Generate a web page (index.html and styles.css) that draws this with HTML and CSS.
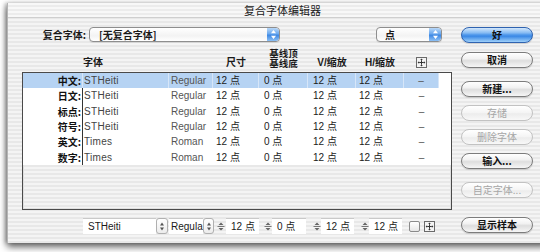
FILE: index.html
```html
<!DOCTYPE html>
<html lang="zh">
<head>
<meta charset="utf-8">
<title>复合字体编辑器</title>
<link rel="stylesheet" href="styles.css">
</head>
<body>
<div class="window">
  <div class="titlebar">复合字体编辑器</div>
  <div class="content">
    <div class="main">
      <div class="toprow">
        <span class="lbl">复合字体:</span>
        <div class="popup popup-wide">
          <span class="popup-text">[无复合字体]</span>
          <span class="popup-arrows"><svg width="7" height="11" viewBox="0 0 7 11"><path d="M3.5 1L6 4.2H1z M3.5 10L6 6.8H1z" fill="#fff"/></svg></span>
        </div>
        <div class="popup popup-unit">
          <span class="popup-text">点</span>
          <span class="popup-arrows"><svg width="7" height="11" viewBox="0 0 7 11"><path d="M3.5 1L6 4.2H1z M3.5 10L6 6.8H1z" fill="#fff"/></svg></span>
        </div>
      </div>

      <div class="grid head">
        <div></div>
        <div class="h-left">字体</div>
        <div></div>
        <div>尺寸</div>
        <div class="h-two">基线顶<br>基线底</div>
        <div>V/缩放</div>
        <div>H/缩放</div>
        <div class="h-icon"><svg class="movebox" width="11" height="11" viewBox="0 0 11 11"><rect x=".5" y=".5" width="10" height="10" fill="#f4f4f4" stroke="#6a6a6a"/><path d="M5.5 3.2v4.6M3.2 5.5h4.6" stroke="#333" stroke-width="1"/><path d="M5.5 1.6l-1.3 1.5h2.6z M5.5 9.4l-1.3-1.5h2.6z M1.6 5.5l1.5-1.3v2.6z M9.4 5.5l-1.5-1.3v2.6z" fill="#333"/></svg></div>
        <div></div>
      </div>

      <div class="table">
        <div class="grid row sel">
          <div class="c-lbl">中文:</div><div class="c-font">STHeiti</div><div class="c-style">Regular</div><div class="c-size">12 点</div><div class="c-base">0 点</div><div class="c-v">12 点</div><div class="c-h">12 点</div><div class="c-dash">–</div><div class="c-end"></div>
        </div>
        <div class="grid row">
          <div class="c-lbl">日文:</div><div class="c-font">STHeiti</div><div class="c-style">Regular</div><div class="c-size">12 点</div><div class="c-base">0 点</div><div class="c-v">12 点</div><div class="c-h">12 点</div><div class="c-dash">–</div><div class="c-end"></div>
        </div>
        <div class="grid row">
          <div class="c-lbl">标点:</div><div class="c-font">STHeiti</div><div class="c-style">Regular</div><div class="c-size">12 点</div><div class="c-base">0 点</div><div class="c-v">12 点</div><div class="c-h">12 点</div><div class="c-dash">–</div><div class="c-end"></div>
        </div>
        <div class="grid row">
          <div class="c-lbl">符号:</div><div class="c-font">STHeiti</div><div class="c-style">Regular</div><div class="c-size">12 点</div><div class="c-base">0 点</div><div class="c-v">12 点</div><div class="c-h">12 点</div><div class="c-dash">–</div><div class="c-end"></div>
        </div>
        <div class="grid row">
          <div class="c-lbl">英文:</div><div class="c-font">Times</div><div class="c-style">Roman</div><div class="c-size">12 点</div><div class="c-base">0 点</div><div class="c-v">12 点</div><div class="c-h">12 点</div><div class="c-dash">–</div><div class="c-end"></div>
        </div>
        <div class="grid row">
          <div class="c-lbl">数字:</div><div class="c-font">Times</div><div class="c-style">Roman</div><div class="c-size">12 点</div><div class="c-base">0 点</div><div class="c-v">12 点</div><div class="c-h">12 点</div><div class="c-dash">–</div><div class="c-end"></div>
        </div>
      </div>

      <div class="bottom">
        <div class="field f-font">STHeiti</div>
        <div class="stepper"><svg width="6" height="11" viewBox="0 0 6 11"><path d="M3 1.5L5 4.5H1z M3 9.5L5 6.5H1z" fill="#555"/></svg></div>
        <div class="field f-style">Regula</div>
        <div class="stepper s2"><svg width="6" height="11" viewBox="0 0 6 11"><path d="M3 1.5L5 4.5H1z M3 9.5L5 6.5H1z" fill="#555"/></svg></div>

        <div class="spin sp1"><svg width="8" height="11" viewBox="0 0 8 11"><path d="M4 1.5L6.5 4H1.5z M4 9.5L6.5 7H1.5z" fill="#666"/><path d="M0.5 5.5h7" stroke="#777"/></svg></div>
        <div class="field f-num">12 点</div>
        <div class="spin sp2"><svg width="8" height="11" viewBox="0 0 8 11"><path d="M4 1.5L6.5 4H1.5z M4 9.5L6.5 7H1.5z" fill="#666"/><path d="M0.5 5.5h7" stroke="#777"/></svg></div>
        <div class="field f-num f-base">0 点</div>
        <div class="spin sp3"><svg width="8" height="11" viewBox="0 0 8 11"><path d="M4 1.5L6.5 4H1.5z M4 9.5L6.5 7H1.5z" fill="#666"/><path d="M0.5 5.5h7" stroke="#777"/></svg></div>
        <div class="field f-num">12 点</div>
        <div class="spin sp3"><svg width="8" height="11" viewBox="0 0 8 11"><path d="M4 1.5L6.5 4H1.5z M4 9.5L6.5 7H1.5z" fill="#666"/><path d="M0.5 5.5h7" stroke="#777"/></svg></div>
        <div class="field f-num">12 点</div>

        <div class="checkbox"></div>
        <svg class="movebox mb2" width="11" height="11" viewBox="0 0 11 11"><rect x=".5" y=".5" width="10" height="10" fill="#f4f4f4" stroke="#6a6a6a"/><path d="M5.5 3.2v4.6M3.2 5.5h4.6" stroke="#333" stroke-width="1"/><path d="M5.5 1.6l-1.3 1.5h2.6z M5.5 9.4l-1.3-1.5h2.6z M1.6 5.5l1.5-1.3v2.6z M9.4 5.5l-1.5-1.3v2.6z" fill="#333"/></svg>
      </div>
    </div>

    <div class="buttons">
      <div class="btn default b-ok">好</div>
      <div class="btn b-cancel">取消</div>
      <div class="btn b-new">新建...</div>
      <div class="btn disabled b-gap8">存储</div>
      <div class="btn disabled b-gap8">删除字体</div>
      <div class="btn b-gap8">输入...</div>
      <div class="btn disabled b-custom">自定字体...</div>
      <div class="btn b-sample">显示样本</div>
    </div>
  </div>
</div>
</body>
</html>
```

FILE: styles.css
```css
* { box-sizing: border-box; }

html, body {
  margin: 0;
  padding: 0;
  width: 540px;
  height: 252px;
  overflow: hidden;
  background: #ffffff;
}

body {
  font-family: "Liberation Sans", "Noto Sans CJK SC", sans-serif;
  font-size: 10px;
  color: #1a1a1a;
}

.window {
  margin: 3px 0 0 7px;
  width: 540px;
  height: 240px;
  background: repeating-linear-gradient(to bottom, #f4f4f4 0, #f4f4f4 2px, #e8e8e8 2px, #e8e8e8 4px);
  box-shadow: 0 4px 7px rgba(0, 0, 0, 0.6), -2px 0 4px rgba(0, 0, 0, 0.25);
  border-left: 1px solid #b4b4b4;
}

.titlebar {
  height: 15px;
  line-height: 15px;
  text-align: center;
  padding-left: 10px;
  font-size: 11px;
  color: #202020;
  background: repeating-linear-gradient(to bottom, #f8f8f8 0, #f8f8f8 2px, #ececec 2px, #ececec 4px);
  border-bottom: 1px solid #cfcfcf;
  font-family: "Noto Sans CJK SC", sans-serif;
}

.content {
  display: flex;
}

.main {
  width: 452px;
  display: flex;
  flex-direction: column;
}

/* top row */
.toprow {
  display: flex;
  align-items: center;
  margin-top: 9px;
  height: 15px;
}

.lbl {
  width: 78px;
  text-align: right;
  font-weight: bold;
  font-family: "Noto Sans CJK SC", sans-serif;
  line-height: 12px;
  margin-right: 3px;
}

.popup {
  height: 15px;
  border: 1px solid #8e8e8e;
  border-radius: 4px;
  background: linear-gradient(to bottom, #ffffff, #f3f3f3 60%, #ffffff);
  display: flex;
  align-items: center;
  justify-content: space-between;
  overflow: hidden;
  box-shadow: 0 1px 0 rgba(0, 0, 0, 0.08);
}

.popup-wide { width: 191px; }
.popup-unit { width: 66px; margin-left: 96px; }

.popup-text {
  padding-left: 9px;
  font-weight: bold;
  line-height: 12px;
  font-family: "Noto Sans CJK SC", sans-serif;
}

.popup-unit .popup-text { padding-left: 8px; }

.popup-arrows {
  width: 12px;
  height: 13px;
  border-radius: 0 3px 3px 0;
  background: linear-gradient(to bottom, #b9d8f8 0, #6aa8ee 45%, #3d88e4 55%, #8cc0f5 100%);
  display: flex;
  align-items: center;
  justify-content: center;
}

/* grid */
.grid {
  display: grid;
  grid-template-columns: 60px 86px 44px 46px 49px 48px 48px 35px 12px;
}

.head {
  margin-top: 7px;
  margin-left: 15px;
  height: 20px;
  align-items: end;
  font-weight: bold;
  line-height: 10px;
  text-align: center;
  color: #1a1a1a;
}

.head > div { padding-bottom: 1px; }
.head .h-left { text-align: left; }
.head .h-two {
  font-size: 9.5px;
  line-height: 9.5px;
  white-space: nowrap;
}
.head .h-icon { display: flex; justify-content: center; padding-bottom: 1px; }

.table {
  margin-top: 3px;
  margin-left: 14px;
  width: 430px;
  height: 138px;
  border: 1px solid #4a4a4a;
  box-shadow: inset 0 0 0 1px #e0e0e0;
}

.row {
  height: 15.33px;
  line-height: 15.33px;
  background: #ffffff;
  white-space: nowrap;
}

.row > div { overflow: hidden; }

.row.sel { background: #b6d3f3; }
.row.sel > div { border-right: 1px solid #d7e6f8; }
.row.sel > .c-end { border-right: 0; background: #ffffff; }

.c-lbl {
  text-align: right;
  padding-right: 1px;
  font-weight: bold;
  border-right: 1px solid #333;
  font-family: "Noto Sans CJK SC", sans-serif;
  color: #111;
}

.row.sel > .c-lbl { border-right: 1px solid #d7e6f8; }

.c-font { padding-left: 1px; color: #444; letter-spacing: 0.3px; }
.c-style { padding-left: 2px; color: #555; }
.c-size { padding-left: 3px; }
.c-base { padding-left: 5px; }
.c-v { padding-left: 5px; }
.c-h { padding-left: 3px; }
.c-dash { text-align: center; color: #555; }

/* bottom row */
.bottom {
  margin-top: 8px;
  margin-left: 75px;
  height: 16px;
  display: flex;
  align-items: center;
}

.field {
  height: 16px;
  line-height: 16px;
  background: #ffffff;
  border-top: 1px solid #c9c9c9;
  padding-left: 5px;
  white-space: nowrap;
  overflow: hidden;
}

.f-font { width: 73px; padding-left: 5px; }
.f-style { width: 34px; padding-left: 2px; margin-left: 1px; }
.f-num { width: 33px; }
.f-base { width: 34px; }

.stepper {
  width: 12px;
  height: 16px;
  border: 1px solid #b0b0b0;
  border-radius: 3px;
  background: linear-gradient(to bottom, #ffffff, #ececec);
  display: flex;
  align-items: center;
  justify-content: center;
}

.stepper.s2 { width: 11px; }

.spin {
  width: 8px;
  height: 16px;
  display: flex;
  align-items: center;
  justify-content: center;
}

.sp1 { margin-left: 3px; margin-right: 1px; }
.sp2 { margin-left: 5px; }
.sp3 { margin-left: 7px; }

.checkbox {
  width: 11px;
  height: 11px;
  margin-left: 7px;
  border: 1px solid #8a8a8a;
  border-radius: 2px;
  background: linear-gradient(to bottom, #ffffff, #e6e6e6);
}

.mb2 { margin-left: 4px; }

/* buttons */
.buttons {
  width: 72px;
  margin-left: 1px;
  display: flex;
  flex-direction: column;
}

.btn {
  height: 16px;
  line-height: 14px;
  border: 1px solid #7c7c7c;
  border-radius: 8px;
  background: linear-gradient(to bottom, #ffffff 0, #f2f2f2 40%, #dedede 55%, #f6f6f6 100%);
  text-align: center;
  font-weight: bold;
  font-family: "Noto Sans CJK SC", sans-serif;
  color: #111;
  box-shadow: 0 1px 1px rgba(0, 0, 0, 0.15);
}

.btn.default {
  border-color: #2f63b0;
  background: linear-gradient(to bottom, #d4e8fc 0, #86bbf3 35%, #4b95ea 50%, #3d8ae6 60%, #9fd0fa 100%);
  color: #111;
}

.btn.disabled {
  border-color: #c2c2c2;
  color: #a6a6a6;
  font-weight: normal;
  background: linear-gradient(to bottom, #ffffff, #f4f4f4 50%, #ececec 55%, #f8f8f8);
  box-shadow: none;
}

.b-ok { margin-top: 9px; }
.b-cancel { margin-top: 9px; }
.b-new { margin-top: 13px; }
.b-gap8 { margin-top: 8px; }
.b-custom { margin-top: 13px; }
.b-sample { margin-top: 19px; }
```
